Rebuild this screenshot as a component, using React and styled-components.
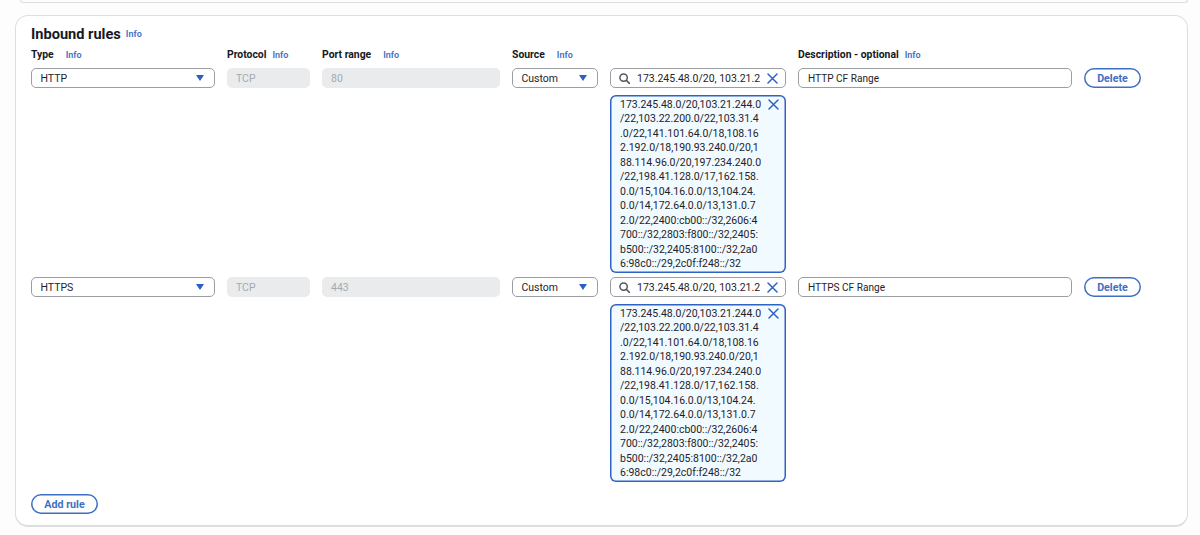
import React from "react";
import styled, { createGlobalStyle } from "styled-components";

const GlobalStyle = createGlobalStyle`
  html, body {
    margin: 0;
    padding: 0;
    background: #fdfdfd;
    overflow: hidden;
  }
  body {
    font-family: Roboto, "Liberation Sans", sans-serif;
    color: #16191f;
  }
`;

const Page = styled.div`
  width: 1200px;
  height: 535px;
  box-sizing: border-box;
  padding: 0 12px 0 15px;
  overflow: hidden;
`;

const TopCard = styled.div`
  height: 2px;
  margin: 0 0 12px 5px;
  border-bottom: 1px solid #dcdee0;
  border-left: 1px solid #dcdee0;
  border-right: 1px solid #dcdee0;
  border-radius: 0 0 8px 8px;
`;

const Card = styled.section`
  height: 512px;
  box-sizing: border-box;
  padding: 9px 15px 0;
  background: #fff;
  border: 1px solid #dcdee0;
  border-bottom-width: 2px;
  border-radius: 13px;
`;

const Heading = styled.h2`
  margin: 0;
  height: 18px;
  display: flex;
  align-items: center;
  gap: 5px;
  font-size: 14.6px;
  line-height: 18px;
  font-weight: 700;
  color: #16191f;
`;

const InfoLink = styled.a`
  font-size: 9px;
  font-weight: 600;
  color: #3f6fc4;
`;

const Grid = styled.div`
  display: grid;
  grid-template-columns: 184px 83px 178px 86px 176px 274px 57px;
  column-gap: 12px;
  margin-top: 5px;
`;

const Label = styled.div`
  height: 14px;
  display: flex;
  align-items: center;
  gap: ${(p) => p.$gap || 12}px;
  font-size: 10.4px;
  line-height: 14px;
  font-weight: 700;
  white-space: nowrap;
  margin-bottom: 6px;
`;

const RuleRow = styled.div`
  display: contents;
`;

const Control = styled.div`
  height: 20px;
  box-sizing: border-box;
  display: flex;
  align-items: center;
  padding: 0 9px;
  font-size: 10.5px;
  border: 1px solid #9a9ea3;
  border-radius: 5px;
  background: #fff;
  color: #1f2329;
  white-space: nowrap;
  overflow: hidden;
`;

const SelectBox = styled(Control)`
  justify-content: space-between;
  padding: 0 10px 0 8.5px;
`;

const Disabled = styled(Control)`
  border: none;
  background: #e9ebed;
  color: #a6aab0;
`;

const SearchBox = styled(Control)`
  gap: 7px;
  padding: 0 7px 0 8px;
`;

const SearchText = styled.span`
  flex: 1;
  overflow: hidden;
`;

const DescriptionBox = styled(Control)`
  font-size: 10.1px;
`;

const Arrow = styled.svg`
  width: 8px;
  height: 6px;
  fill: #2a5fc9;
  flex: none;
`;

const StrokeIcon = styled.svg`
  width: ${(p) => p.$size}px;
  height: ${(p) => p.$size}px;
  flex: none;
  fill: none;
  stroke: ${(p) => p.$color};
  stroke-width: 1.5;
  stroke-linecap: round;
`;

const PillButton = styled.button`
  height: 20px;
  width: ${(p) => p.$width}px;
  box-sizing: border-box;
  padding: 0;
  font-family: inherit;
  font-size: 10.7px;
  font-weight: 700;
  color: #3f6fc4;
  background: #fff;
  border: none;
  box-shadow: inset 0 0 0 1.5px #3f6fc4;
  border-radius: 10px;
`;

const ExpandedRow = styled.div`
  grid-column: 5;
  margin: 7px 0 4px;
  height: 178px;
  box-sizing: border-box;
  position: relative;
  padding: 3px 5px 0 10px;
  box-shadow: inset 0 0 0 1.5px #2f62c2;
  border-radius: 6px;
  background: #f1faff;
  font-size: 10.5px;
  line-height: 14.48px;
  color: #1f2329;
`;

const Line = styled.div`
  white-space: nowrap;
`;

const Close = styled.span`
  position: absolute;
  top: 4px;
  right: 7px;
  display: flex;
`;

const Spacer = styled.div`
  grid-column: ${(p) => p.$span};
`;

const Footer = styled.div`
  display: flex;
  margin-top: 8px;
`;

const ipLines = [
  "173.245.48.0/20,103.21.244.0",
  "/22,103.22.200.0/22,103.31.4",
  ".0/22,141.101.64.0/18,108.16",
  "2.192.0/18,190.93.240.0/20,1",
  "88.114.96.0/20,197.234.240.0",
  "/22,198.41.128.0/17,162.158.",
  "0.0/15,104.16.0.0/13,104.24.",
  "0.0/14,172.64.0.0/13,131.0.7",
  "2.0/22,2400:cb00::/32,2606:4",
  "700::/32,2803:f800::/32,2405:",
  "b500::/32,2405:8100::/32,2a0",
  "6:98c0::/29,2c0f:f248::/32",
];

const rules = [
  { type: "HTTP", port: "80", description: "HTTP CF Range" },
  { type: "HTTPS", port: "443", description: "HTTPS CF Range" },
];

function CaretDown() {
  return (
    <Arrow viewBox="0 0 8 6">
      <path d="M0 0h8L4 6z" />
    </Arrow>
  );
}

function XIcon({ color = "#2f62c2" }) {
  return (
    <StrokeIcon $size={11} $color={color} viewBox="0 0 11 11">
      <path d="M1 1l9 9M10 1l-9 9" />
    </StrokeIcon>
  );
}

function SearchIcon() {
  return (
    <StrokeIcon $size={11} $color="#54585e" viewBox="0 0 11 11">
      <circle cx="4.6" cy="4.6" r="3.7" />
      <path d="M7.4 7.4L10.4 10.4" />
    </StrokeIcon>
  );
}

function Rule({ rule }) {
  return (
    <RuleRow>
      <SelectBox>
        {rule.type}
        <CaretDown />
      </SelectBox>
      <Disabled>TCP</Disabled>
      <Disabled>{rule.port}</Disabled>
      <SelectBox>
        Custom
        <CaretDown />
      </SelectBox>
      <SearchBox>
        <SearchIcon />
        <SearchText>173.245.48.0/20, 103.21.2</SearchText>
        <XIcon />
      </SearchBox>
      <DescriptionBox>{rule.description}</DescriptionBox>
      <PillButton $width={57}>Delete</PillButton>
      <Spacer $span="1 / span 4" />
      <ExpandedRow>
        {ipLines.map((line) => (
          <Line key={line}>{line}</Line>
        ))}
        <Close>
          <XIcon />
        </Close>
      </ExpandedRow>
      <Spacer $span="6 / span 2" />
    </RuleRow>
  );
}

export default function App() {
  return (
    <Page>
      <GlobalStyle />
      <TopCard />
      <Card>
        <Heading>
          Inbound rules <InfoLink>Info</InfoLink>
        </Heading>
        <Grid>
          <Label>
            Type <InfoLink>Info</InfoLink>
          </Label>
          <Label $gap={6}>
            Protocol <InfoLink>Info</InfoLink>
          </Label>
          <Label>
            Port range <InfoLink>Info</InfoLink>
          </Label>
          <Label>
            Source <InfoLink>Info</InfoLink>
          </Label>
          <div />
          <Label $gap={6}>
            Description - optional <InfoLink>Info</InfoLink>
          </Label>
          <div />
          {rules.map((rule) => (
            <Rule key={rule.type} rule={rule} />
          ))}
        </Grid>
        <Footer>
          <PillButton $width={67}>Add rule</PillButton>
        </Footer>
      </Card>
    </Page>
  );
}
